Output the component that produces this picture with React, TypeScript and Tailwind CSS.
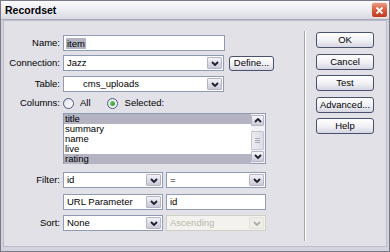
import React from "react";

const font = { fontFamily: '"Liberation Sans", Arial, sans-serif' };

function Chevron({ up = false, faded = false }: { up?: boolean; faded?: boolean }) {
  return (
    <svg width="8" height="5" viewBox="0 0 8 5" className={faded ? "opacity-30" : ""}>
      <path
        d={up ? "M1 4 L4 1 L7 4" : "M1 1 L4 4 L7 1"}
        fill="none"
        stroke="#1d1d2b"
        strokeWidth="1.8"
      />
    </svg>
  );
}

function ArrowBox({ faded = false }: { faded?: boolean }) {
  return (
    <div
      className={`flex h-full w-[15px] shrink-0 items-center justify-center rounded-[1px] border ${
        faded
          ? "border-[#e2e1da] bg-[#eeede6]"
          : "border-[#b4b4c6] bg-gradient-to-b from-[#f2f2f8] to-[#c9c9d8]"
      }`}
    >
      <Chevron faded={faded} />
    </div>
  );
}

function Select({
  className,
  text,
  textClass = "pl-[2px]",
  disabled = false,
}: {
  className: string;
  text: string;
  textClass?: string;
  disabled?: boolean;
}) {
  return (
    <div
      className={`flex h-[16px] shrink-0 border p-[1px] ${
        disabled ? "border-[#d0cfc6] bg-[#f3f2ee] text-[#b9b7ad]" : "border-[#8e9bb2] bg-white text-black"
      } ${className}`}
    >
      <div className={`flex flex-1 items-center leading-none ${textClass}`}>{text}</div>
      <ArrowBox faded={disabled} />
    </div>
  );
}

function Btn({ label, className = "" }: { label: string; className?: string }) {
  return (
    <div
      className={`flex h-[16px] w-[58px] items-center justify-center rounded-[3px] border border-[#49526c] bg-gradient-to-b from-[#ffffff] via-[#f2f2f6] to-[#d6d6e2] leading-none text-black ${className}`}
    >
      {label}
    </div>
  );
}

function Label({ text }: { text: string }) {
  return <div className="w-[56px] shrink-0 pr-[0px] text-right leading-none">{text}</div>;
}

function Radio({ checked }: { checked: boolean }) {
  return (
    <div className="flex h-[11px] w-[11px] items-center justify-center rounded-full border border-[#4d5a7a] bg-gradient-to-br from-[#e0e0ea] to-[#ffffff]">
      {checked && <div className="h-[5px] w-[5px] rounded-full bg-gradient-to-br from-[#6fd16f] to-[#1e9a1e]" />}
    </div>
  );
}

export default function App() {
  const items = [
    { t: "title", sel: true },
    { t: "summary", sel: false },
    { t: "name", sel: false },
    { t: "live", sel: false },
    { t: "rating", sel: true },
  ];
  return (
    <div
      className="flex h-[252px] w-[390px] flex-col overflow-hidden border border-[#7a7a86] bg-[#d3d3dd] text-[9.5px] text-black"
      style={font}
    >
      {/* Title bar */}
      <div className="flex h-[19px] shrink-0 items-center justify-between border-b border-[#a9a9b8] bg-gradient-to-b from-[#fbfbfd] via-[#ececf2] to-[#d9d9e3] pl-[4px] pr-[1px]">
        <span className="text-[10.5px] font-bold leading-none">Recordset</span>
        <div className="flex h-[16px] w-[17px] items-center justify-center rounded-[3px] border border-[#f4e6e2] bg-gradient-to-b from-[#ec9a80] via-[#d85c3c] to-[#c0391e]">
          <svg width="9" height="9" viewBox="0 0 9 9">
            <path d="M1.5 1.5 L7.5 7.5 M7.5 1.5 L1.5 7.5" stroke="white" strokeWidth="1.8" />
          </svg>
        </div>
      </div>

      {/* Body frame */}
      <div className="flex flex-1 px-[2px] pb-[4px]">
        <div className="flex flex-1 border border-[#bdbdc9] bg-[#e2e1e7]">
          {/* Left form */}
          <div className="flex w-[300px] shrink-0 flex-col pt-[14px]">
            {/* Name */}
            <div className="flex h-[16px] items-center">
              <Label text="Name:" />
              <div className="ml-[3px] flex h-[16px] w-[162px] items-center border border-[#8e9bb2] bg-white pl-[2px]">
                <span className="bg-[#b3b3c1] px-[1px] leading-[11px]">item</span>
              </div>
            </div>
            {/* Connection */}
            <div className="mt-[4px] flex h-[16px] items-center">
              <Label text="Connection:" />
              <Select className="ml-[3px] w-[161px]" text="Jazz" />
              <div className="ml-[5px] flex h-[15px] w-[45px] items-center justify-center rounded-[3px] border border-[#49526c] bg-gradient-to-b from-[#ffffff] via-[#f2f2f6] to-[#d6d6e2] leading-none">
                Define...
              </div>
            </div>
            {/* Table */}
            <div className="mt-[5px] flex h-[16px] items-center">
              <Label text="Table:" />
              <Select className="ml-[3px] w-[161px]" text="cms_uploads" textClass="pl-[18px]" />
            </div>
            {/* Columns */}
            <div className="mt-[5px] flex h-[12px] items-center">
              <Label text="Columns:" />
              <div className="ml-[3px] flex items-center">
                <Radio checked={false} />
                <span className="ml-[6px] leading-none">All</span>
                <div className="ml-[16px]">
                  <Radio checked={true} />
                </div>
                <span className="ml-[7px] leading-none">Selected:</span>
              </div>
            </div>
            {/* List */}
            <div className="ml-[59px] mt-[4px] flex h-[51px] w-[203px] border border-[#8e9bb2] bg-white">
              <div className="flex flex-1 flex-col">
                {items.map((it) => (
                  <div
                    key={it.t}
                    className={`h-[10px] pl-[1px] leading-[10px] ${it.sel ? "bg-[#b3b3c1]" : ""}`}
                  >
                    {it.t}
                  </div>
                ))}
              </div>
              <div className="flex w-[14px] flex-col bg-[#f3f3f6] py-[1px] pr-[1px]">
                <div className="flex h-[11px] items-center justify-center rounded-[1px] border border-[#b4b4c6] bg-gradient-to-b from-[#f6f6fa] to-[#cbcbd9]">
                  <Chevron up />
                </div>
                <div className="mt-[5px] flex h-[19px] flex-col items-center justify-center gap-[1px] rounded-[1px] border border-[#c4c4d2] bg-gradient-to-r from-[#ececf2] to-[#dcdce6]">
                  <div className="h-px w-[5px] bg-[#a8a8b8]" />
                  <div className="h-px w-[5px] bg-[#a8a8b8]" />
                  <div className="h-px w-[5px] bg-[#a8a8b8]" />
                </div>
                <div className="flex-1" />
                <div className="flex h-[11px] items-center justify-center rounded-[1px] border border-[#b4b4c6] bg-gradient-to-b from-[#f6f6fa] to-[#cbcbd9]">
                  <Chevron />
                </div>
              </div>
            </div>
            {/* Filter */}
            <div className="mt-[8px] flex h-[16px] items-center">
              <Label text="Filter:" />
              <Select className="ml-[3px] w-[100px]" text="id" />
              <Select className="ml-[3px] w-[100px]" text="=" />
            </div>
            {/* URL Parameter */}
            <div className="mt-[6px] flex h-[16px] items-center">
              <div className="w-[56px] shrink-0" />
              <Select className="ml-[3px] w-[100px]" text="URL Parameter" />
              <div className="ml-[3px] flex h-[16px] w-[100px] items-center border border-[#8e9bb2] bg-white pl-[3px] leading-none">
                id
              </div>
            </div>
            {/* Sort */}
            <div className="mt-[5px] flex h-[16px] items-center">
              <Label text="Sort:" />
              <Select className="ml-[3px] w-[100px]" text="None" />
              <Select className="ml-[3px] w-[100px]" text="Ascending" disabled />
            </div>
          </div>

          {/* Separator */}
          <div className="mt-[10px] flex h-[210px] shrink-0">
            <div className="w-px bg-[#a4a4b0]" />
            <div className="w-px bg-white" />
          </div>

          {/* Buttons */}
          <div className="ml-[10px] flex flex-col pt-[11px]">
            <Btn label="OK" />
            <Btn label="Cancel" className="mt-[6px]" />
            <Btn label="Test" className="mt-[5px]" />
            <Btn label="Advanced..." className="mt-[6px]" />
            <Btn label="Help" className="mt-[5px]" />
          </div>
        </div>
      </div>
    </div>
  );
}
